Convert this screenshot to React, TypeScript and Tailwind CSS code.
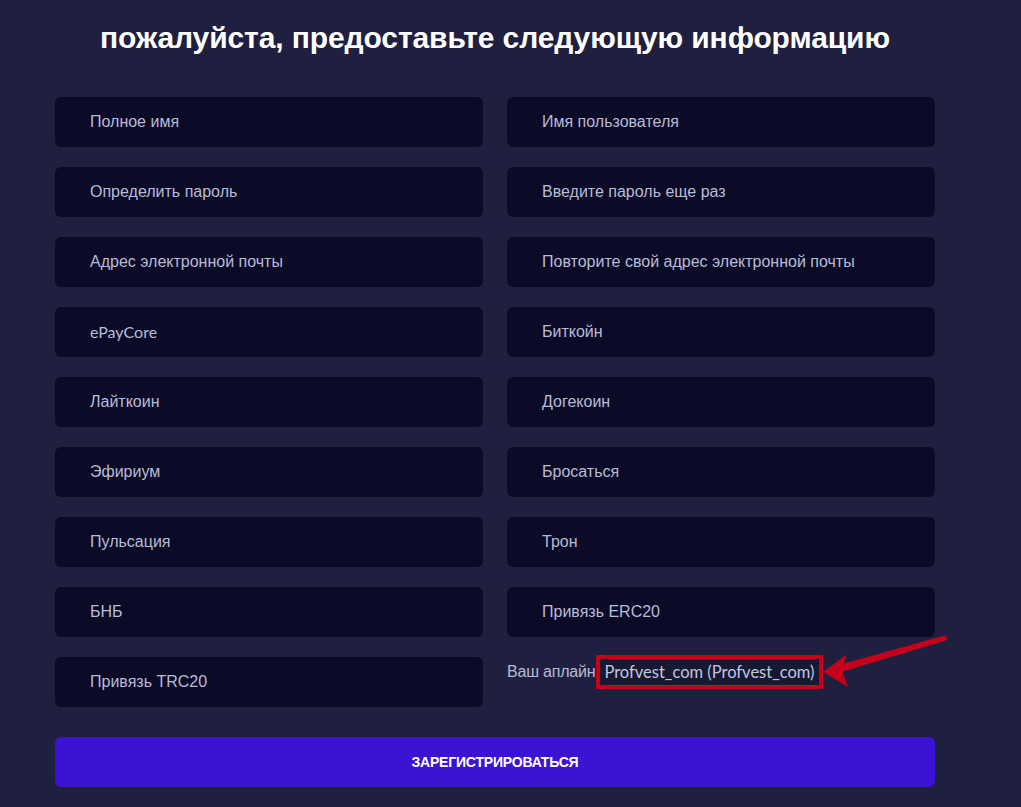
import React from "react";

const left = ["Полное имя", "Определить пароль", "Адрес электронной почты", "ePayCore", "Лайткоин", "Эфириум", "Пульсация", "БНБ", "Привязь TRC20"];
const right = ["Имя пользователя", "Введите пароль еще раз", "Повторите свой адрес электронной почты", "Биткойн", "Догекоин", "Бросаться", "Трон", "Привязь ERC20"];

function Field({ label }: { label: string }) {
  const latin = /^[A-Za-z]/.test(label);
  return (
    <div className="h-[50px] rounded-[6px] bg-[#0b0b28] flex items-center pl-[35px]">
      <span
        className="text-[16px] text-[#b9bbd6]"
        style={{ fontFamily: latin ? '"Lato", "Liberation Sans", sans-serif' : undefined }}
      >
        {label}
      </span>
    </div>
  );
}

export default function App() {
  return (
    <div className="min-h-[807px] w-full bg-[#1f203f] relative" style={{ fontFamily: '"Liberation Sans", Arial, sans-serif' }}>
      <div className="ml-[55px] w-[880px] pt-[20px]">
        <h1 className="text-center text-white font-bold text-[30px] leading-[36px] tracking-[-0.1px]">
          пожалуйста, предоставьте следующую информацию
        </h1>
        <div className="mt-[41px] grid grid-cols-2 gap-x-[24px]">
          <div className="flex flex-col gap-[20px]">
            {left.map((l) => (
              <Field key={l} label={l} />
            ))}
          </div>
          <div className="flex flex-col gap-[20px]">
            {right.map((l) => (
              <Field key={l} label={l} />
            ))}
            <div className="h-[50px] flex items-start">
              <div className="flex items-center -mt-[2px]">
                <span className="text-[16px] text-[#b9bbd6] tracking-[-0.2px]">Ваш аплайн</span>
                <span className="ml-[1px] border-[4px] border-[#c4001b] bg-[#171832] px-[4px] h-[34px] flex items-center">
                  <span className="text-[16.5px] text-[#c4c6e0]" style={{ fontFamily: '"Lato", "Liberation Sans", sans-serif' }}>
                    Profvest_com (Profvest_com)
                  </span>
                </span>
              </div>
            </div>
          </div>
        </div>
        <button className="mt-[30px] w-full h-[50px] rounded-[6px] bg-[#3c12d3] text-white font-bold text-[14px] tracking-[-0.2px]">
          ЗАРЕГИСТРИРОВАТЬСЯ
        </button>
      </div>
      <svg className="absolute left-0 top-0 pointer-events-none" width="1021" height="807">
        <polygon points="946,635 947,640 838,673 835,666" fill="#c4001b" />
        <polygon points="823,672 846,655 842,670 848,687" fill="#c4001b" />
      </svg>
    </div>
  );
}
